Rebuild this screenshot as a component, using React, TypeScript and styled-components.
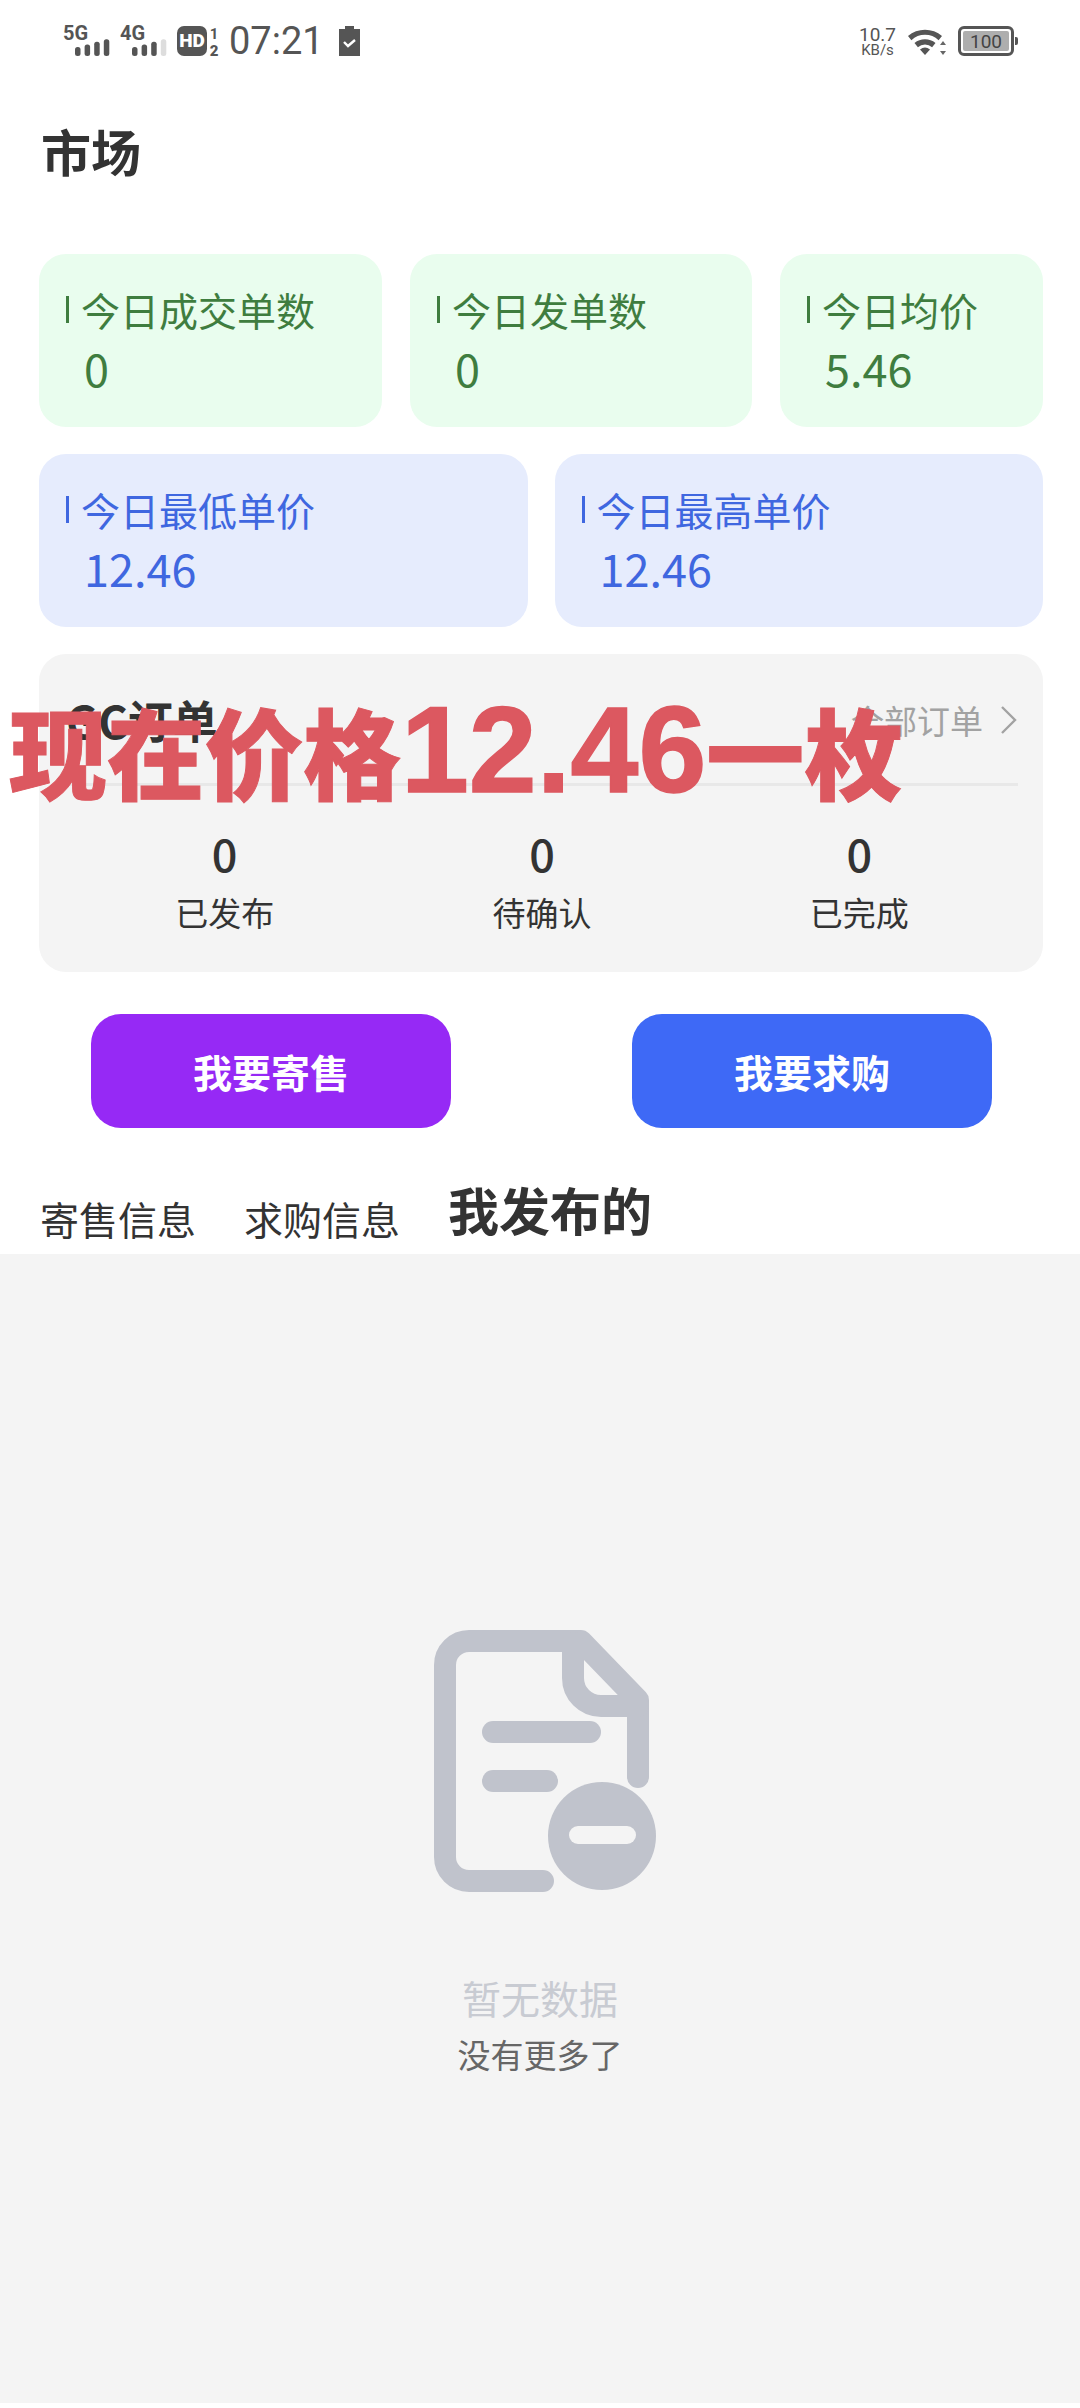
import styled, { createGlobalStyle } from "styled-components";

const GlobalStyle = createGlobalStyle`
  html, body {
    margin: 0;
    padding: 0;
    background: #fff;
  }
  body {
    font-family: "Noto Sans CJK SC", "Noto Sans", sans-serif;
  }
  * {
    box-sizing: border-box;
  }
`;

const Page = styled.div`
  position: relative;
  width: 1080px;
  height: 2408px;
  overflow: hidden;
  display: flex;
  flex-direction: column;
  background: #fff;
`;

const StatusBar = styled.div`
  height: 82px;
  padding: 0 63px 0 63px;
  display: flex;
  align-items: center;
  justify-content: space-between;
  color: #555;
`;

const StatusGroup = styled.div`
  display: flex;
  align-items: center;
`;

const Time = styled.span`
  font-family: Roboto, sans-serif;
  font-size: 38px;
  line-height: 38px;
  color: #555;
  margin: 0 20px 0 10px;
  width: 90px;
`;

const Speed = styled.div`
  display: flex;
  flex-direction: column;
  align-items: center;
  font-family: Roboto, sans-serif;
  color: #555;
  margin-right: 11px;
`;

const SpeedValue = styled.span`
  font-size: 19px;
  line-height: 17px;
`;

const SpeedUnit = styled.span`
  font-size: 15px;
  line-height: 14px;
`;

const Battery = styled.div`
  position: relative;
  width: 56px;
  height: 30px;
  margin-left: 11px;
  margin-right: 3px;
  border: 3px solid #555;
  border-radius: 6px;
  padding: 2px;
  display: flex;

  &::after {
    content: "";
    position: absolute;
    right: -7px;
    top: 8px;
    width: 3px;
    height: 8px;
    border-radius: 0 2px 2px 0;
    background: #555;
  }
`;

const BatteryLevel = styled.div`
  flex: 1;
  background: #aeaeae;
  border-radius: 2px;
  display: flex;
  align-items: center;
  justify-content: center;
  font-family: Roboto, sans-serif;
  font-size: 19px;
  color: #444;
`;

const Title = styled.h1`
  margin: 43px 0 0 41px;
  height: 50px;
  font-size: 50px;
  line-height: 50px;
  font-weight: 700;
  color: #333;
`;

const Stats = styled.section`
  margin: 79px 37px 0 39px;
  display: flex;
  flex-direction: column;
  gap: 27px;
`;

const StatRow = styled.div<{ $columns: string; $gap: number }>`
  display: grid;
  grid-template-columns: ${(p) => p.$columns};
  gap: ${(p) => p.$gap}px;
`;

const tones = {
  green: { bg: "#e9fdee", fg: "#3f7d3f" },
  blue: { bg: "#e6ecfd", fg: "#3f67e0" },
};

const StatCard = styled.div<{ $tone: keyof typeof tones }>`
  height: 173px;
  padding: 32px 0 0 27px;
  border-radius: 27px;
  background: ${(p) => tones[p.$tone].bg};
  color: ${(p) => tones[p.$tone].fg};
`;

const StatLabel = styled.div`
  display: flex;
  align-items: center;
  font-size: 39px;
  line-height: 46px;
  white-space: nowrap;

  &::before {
    content: "";
    width: 3px;
    height: 27px;
    margin-right: 12px;
    background: currentColor;
  }
`;

const StatValue = styled.div`
  margin: 13px 0 0 18px;
  font-size: 45px;
  line-height: 46px;
`;

const OrderCard = styled.section`
  margin: 27px 37px 0 39px;
  height: 318px;
  border-radius: 27px;
  background: #f4f4f4;
  padding: 40px 25px 0 27px;
`;

const OrderHead = styled.div`
  height: 92px;
  padding-bottom: 38px;
  border-bottom: 3px solid #e8e8e8;
  display: flex;
  align-items: center;
  justify-content: space-between;
`;

const OrderTitle = styled.span`
  font-size: 45px;
  line-height: 48px;
  font-weight: 700;
  color: #333;
`;

const AllOrders = styled.span`
  display: flex;
  align-items: center;
  gap: 17px;
  font-size: 33px;
  color: #a2a2a2;
`;

const OrderStats = styled.div`
  display: grid;
  grid-template-columns: repeat(3, 1fr);
  margin-top: 43px;
`;

const OrderStat = styled.div`
  display: flex;
  flex-direction: column;
  align-items: center;
`;

const OrderCount = styled.span`
  font-size: 45px;
  line-height: 48px;
  font-weight: 500;
  color: #333;
`;

const OrderLabel = styled.span`
  margin-top: 13px;
  font-size: 33px;
  line-height: 44px;
  color: #333;
`;

const Actions = styled.div`
  margin: 42px 88px 0 91px;
  display: flex;
  justify-content: space-between;
`;

const ActionButton = styled.button<{ $bg: string }>`
  width: 360px;
  height: 114px;
  border: 0;
  border-radius: 30px;
  background: ${(p) => p.$bg};
  color: #fff;
  font-family: inherit;
  font-size: 39px;
  font-weight: 700;
`;

const Tabs = styled.nav`
  margin: 50px 0 0 40px;
  height: 76px;
  display: flex;
  align-items: flex-end;
  gap: 48px;
`;

const Tab = styled.span<{ $active?: boolean }>`
  font-size: ${(p) => (p.$active ? 51 : 39)}px;
  font-weight: ${(p) => (p.$active ? 700 : 400)};
  line-height: ${(p) => (p.$active ? 60 : 50)}px;
  margin-bottom: ${(p) => (p.$active ? 15 : 11)}px;
  color: #333;
`;

const EmptyPanel = styled.section`
  height: 1149px;
  background: #f4f4f4;
  display: flex;
  flex-direction: column;
  align-items: center;
  padding-top: 376px;
`;

const EmptyIcon = styled.svg`
  width: 224px;
  height: 262px;
  margin-left: 11px;
`;

const EmptyTitle = styled.div`
  margin-top: 80px;
  font-size: 39px;
  line-height: 50px;
  color: #c8cbd2;
`;

const EmptyHint = styled.div`
  margin-top: 10px;
  font-size: 33px;
  line-height: 44px;
  color: #666;
`;

const PriceBanner = styled.div`
  position: absolute;
  left: 9px;
  top: 679px;
  font-family: "Noto Sans CJK SC", sans-serif;
  font-size: 98px;
  line-height: 140px;
  font-weight: 900;
  color: #dc5860;
  white-space: nowrap;
  -webkit-text-stroke: 1px #dc5860;
`;

const PriceDigits = styled.span`
  font-family: "Liberation Sans", sans-serif;
  font-size: 122px;
  font-weight: 700;
  -webkit-text-stroke: 1.5px #dc5860;
`;

function Signal() {
  const bars = (x0: number, dim: boolean) =>
    [0, 1, 2, 3].map((i) => {
      const h = 9 + i * 2.6;
      return (
        <rect
          key={i}
          x={x0 + i * 9.6}
          y={31 - h}
          width={5.5}
          height={h}
          rx={2.5}
          fill={dim && i === 3 ? "#ddd" : "#555"}
        />
      );
    });
  return (
    <svg width="104" height="40" viewBox="0 -4 104 40">
      <text x="0" y="15" fontFamily="Roboto, sans-serif" fontWeight="700" fontSize="20" fill="#555">
        5G
      </text>
      {bars(12, false)}
      <text x="57" y="15" fontFamily="Roboto, sans-serif" fontWeight="700" fontSize="20" fill="#555">
        4G
      </text>
      {bars(69, true)}
    </svg>
  );
}

function HdBadge() {
  return (
    <svg width="42" height="40" viewBox="0 -4 42 40" style={{ marginLeft: 10 }}>
      <rect x="0" y="1" width="30" height="30" rx="7" fill="#555" />
      <text x="15" y="22" textAnchor="middle" fontFamily="Roboto, sans-serif" fontWeight="900" fontSize="19" fill="#fff">
        HD
      </text>
      <text x="37" y="14" textAnchor="middle" fontFamily="Roboto, sans-serif" fontWeight="700" fontSize="15" fill="#555">
        1
      </text>
      <text x="37" y="31" textAnchor="middle" fontFamily="Roboto, sans-serif" fontWeight="900" fontSize="15" fill="#555">
        2
      </text>
    </svg>
  );
}

function BatteryCheck() {
  return (
    <svg width="21" height="32" viewBox="0 0 21 32">
      <path d="M6 1h9v3h6v27H0V4h6z" fill="#555" />
      <path d="M5 17l4 4 7-6" fill="none" stroke="#fff" strokeWidth="2.4" />
    </svg>
  );
}

function Wifi() {
  return (
    <svg width="40" height="30" viewBox="0 0 40 30">
      <path d="M1 10a26 26 0 0 1 34 0l-3.4 4.2a20 20 0 0 0-27.2 0z" fill="#555" />
      <path d="M7.5 17a16.5 16.5 0 0 1 21 0l-3.4 4.2a11 11 0 0 0-14.2 0z" fill="#555" />
      <path d="M13 23.5a8 8 0 0 1 10 0L18 29z" fill="#555" />
      <path d="M36 15l3 4h-6zM36 29l3-4h-6z" fill="#666" />
    </svg>
  );
}

function Chevron() {
  return (
    <svg width="18" height="30" viewBox="0 0 18 30">
      <path d="M2 2l13 13L2 28" fill="none" stroke="#a2a2a2" strokeWidth="2.4" />
    </svg>
  );
}

const topStats = [
  { label: "今日成交单数", value: "0" },
  { label: "今日发单数", value: "0" },
  { label: "今日均价", value: "5.46" },
];

const priceStats = [
  { label: "今日最低单价", value: "12.46" },
  { label: "今日最高单价", value: "12.46" },
];

const orderStats = ["已发布", "待确认", "已完成"];

export default function App() {
  return (
    <Page>
      <GlobalStyle />
      <StatusBar>
        <StatusGroup>
          <Signal />
          <HdBadge />
          <Time>07:21</Time>
          <BatteryCheck />
        </StatusGroup>
        <StatusGroup>
          <Speed>
            <SpeedValue>10.7</SpeedValue>
            <SpeedUnit>KB/s</SpeedUnit>
          </Speed>
          <Wifi />
          <Battery>
            <BatteryLevel>100</BatteryLevel>
          </Battery>
        </StatusGroup>
      </StatusBar>

      <Title>市场</Title>

      <Stats>
        <StatRow $columns="343px 342px 263px" $gap={28}>
          {topStats.map((s) => (
            <StatCard key={s.label} $tone="green">
              <StatLabel>{s.label}</StatLabel>
              <StatValue>{s.value}</StatValue>
            </StatCard>
          ))}
        </StatRow>
        <StatRow $columns="1fr 1fr" $gap={27}>
          {priceStats.map((s) => (
            <StatCard key={s.label} $tone="blue">
              <StatLabel>{s.label}</StatLabel>
              <StatValue>{s.value}</StatValue>
            </StatCard>
          ))}
        </StatRow>
      </Stats>

      <OrderCard>
        <OrderHead>
          <OrderTitle>GC订单</OrderTitle>
          <AllOrders>
            全部订单
            <Chevron />
          </AllOrders>
        </OrderHead>
        <OrderStats>
          {orderStats.map((label) => (
            <OrderStat key={label}>
              <OrderCount>0</OrderCount>
              <OrderLabel>{label}</OrderLabel>
            </OrderStat>
          ))}
        </OrderStats>
      </OrderCard>

      <Actions>
        <ActionButton $bg="#9629f5">我要寄售</ActionButton>
        <ActionButton $bg="#3e69f6">我要求购</ActionButton>
      </Actions>

      <Tabs>
        <Tab>寄售信息</Tab>
        <Tab>求购信息</Tab>
        <Tab $active>我发布的</Tab>
      </Tabs>

      <EmptyPanel>
        <EmptyIcon viewBox="0 0 224 262">
          <g fill="none" stroke="#c0c3cc" strokeWidth="22" strokeLinecap="round" strokeLinejoin="round">
            <path d="M109 251H35a24 24 0 0 1-24-24V35a24 24 0 0 1 24-24H147L204 70V147" />
            <path d="M139 13v35a28 28 0 0 0 28 28h37" />
            <path d="M59 102h97" />
            <path d="M59 151h54" />
          </g>
          <circle cx="168" cy="206" r="54" fill="#c0c3cc" />
          <rect x="135" y="196" width="67" height="18" rx="9" fill="#f4f4f4" />
        </EmptyIcon>
        <EmptyTitle>暂无数据</EmptyTitle>
        <EmptyHint>没有更多了</EmptyHint>
      </EmptyPanel>

      <PriceBanner>
        现在价格<PriceDigits>12.46</PriceDigits>一枚
      </PriceBanner>
    </Page>
  );
}
